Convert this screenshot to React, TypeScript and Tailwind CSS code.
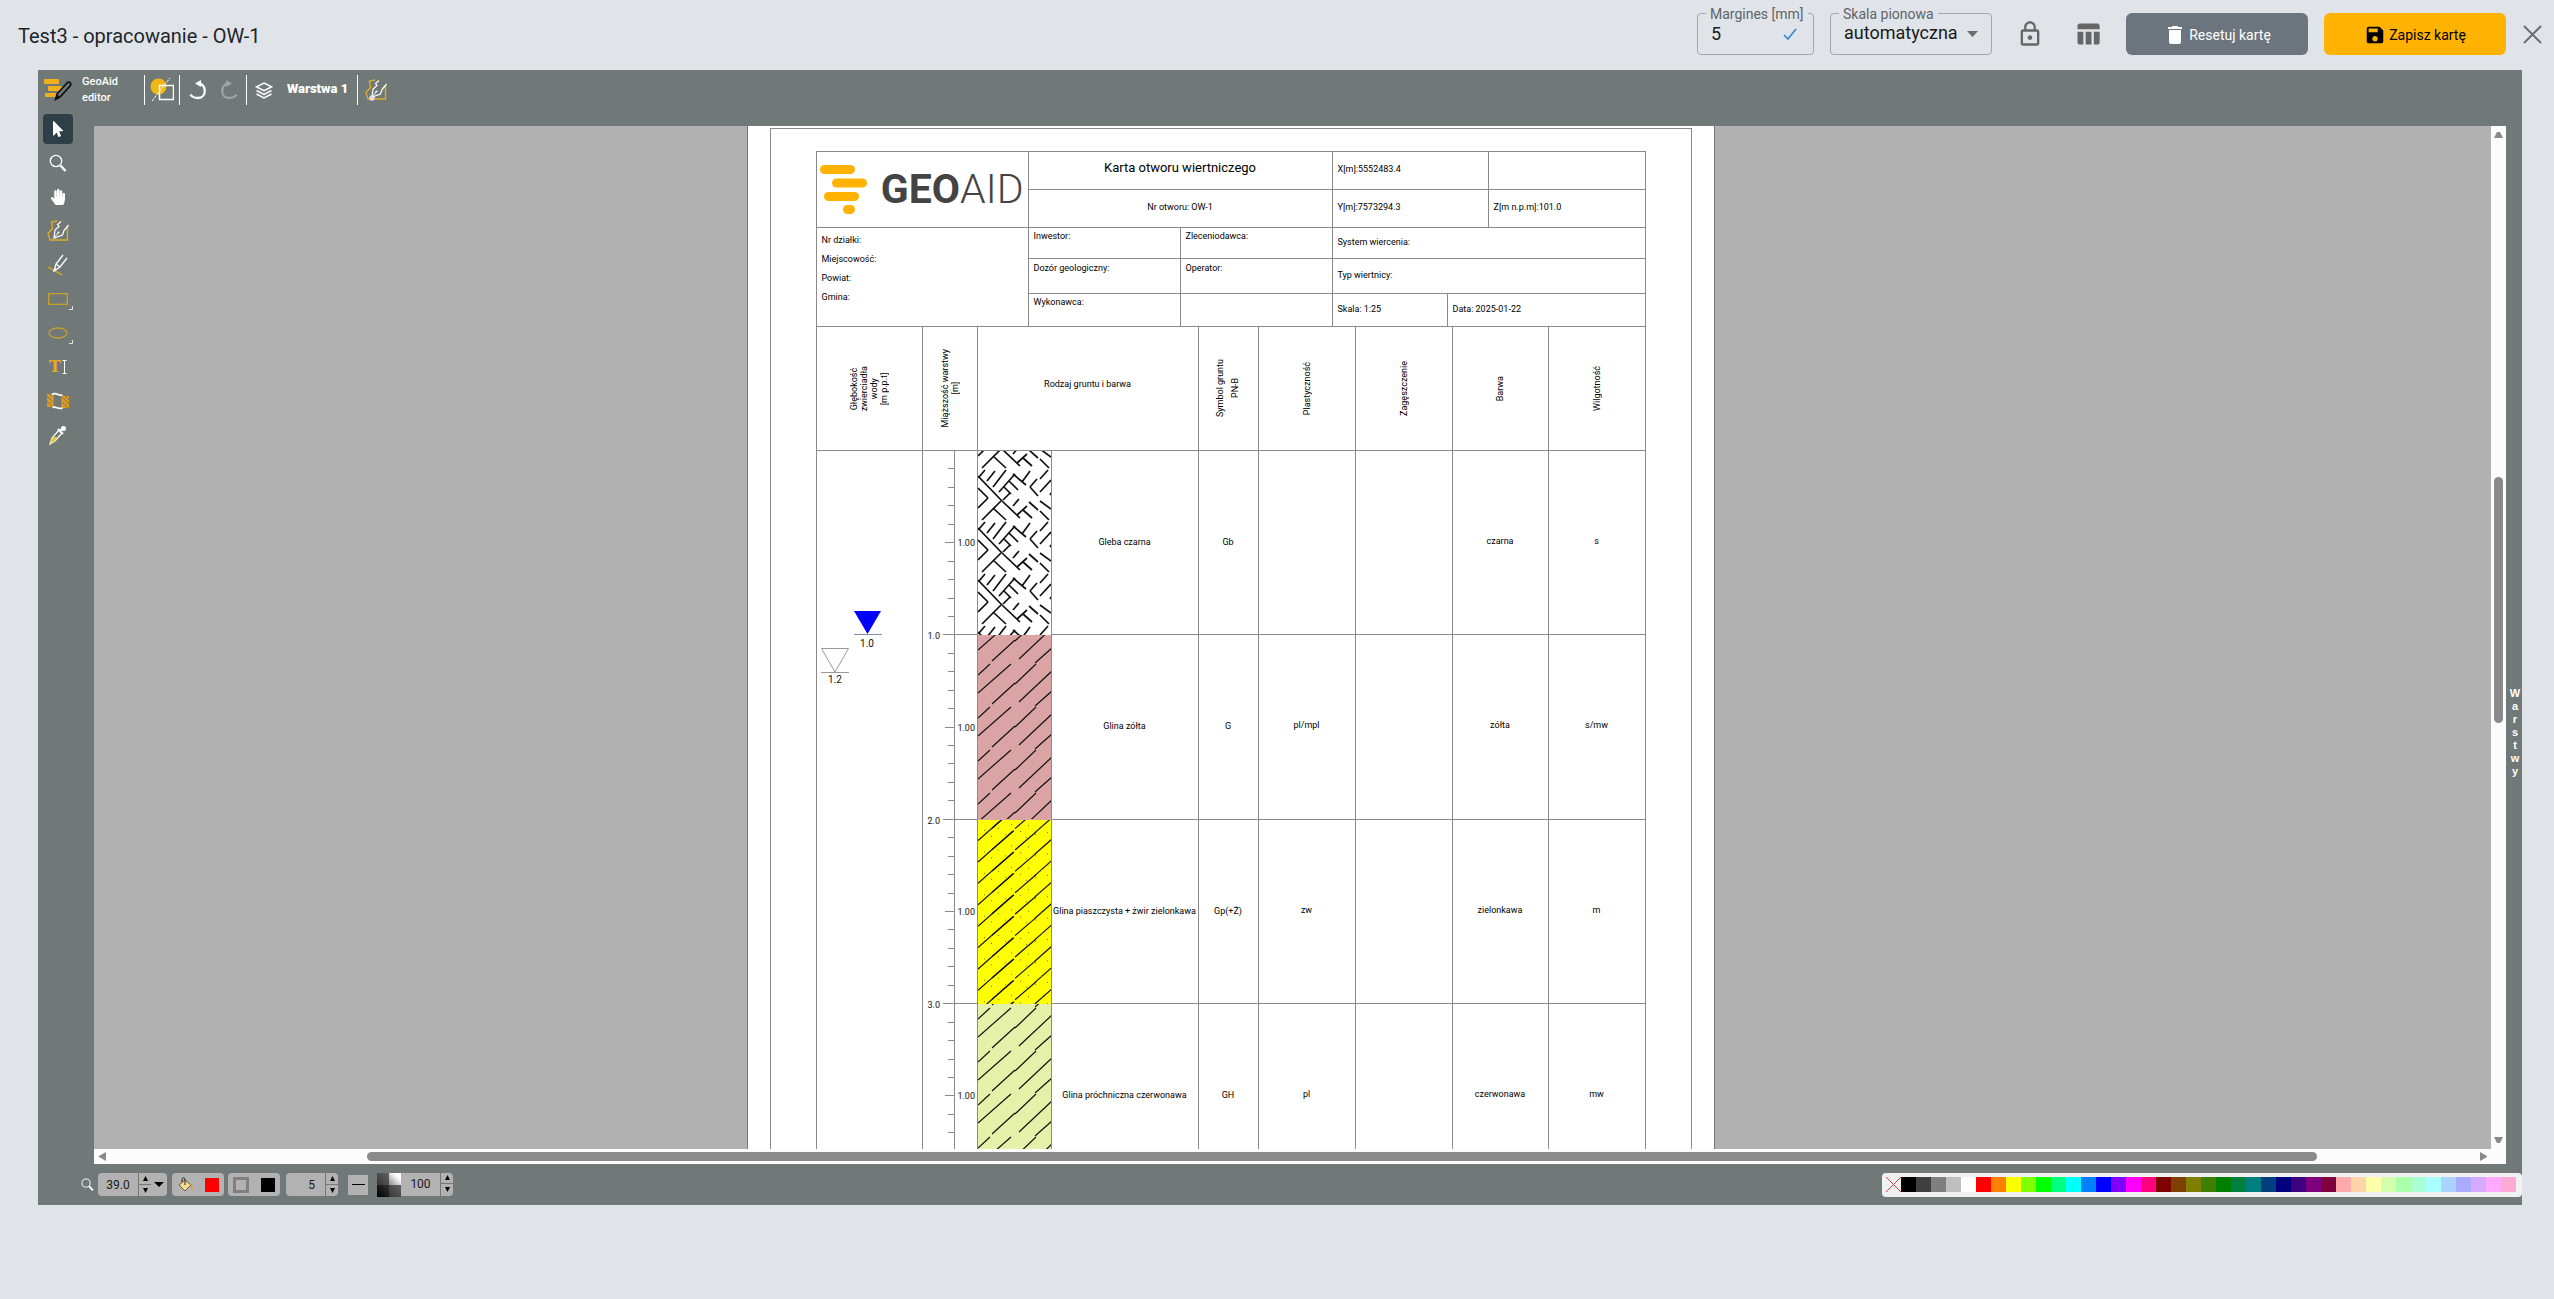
import React from "react";
import { MdLockOutline, MdTableChart, MdDelete, MdSave } from "react-icons/md";
import { FaMousePointer, FaHandPaper } from "react-icons/fa";

const PALETTE = [
  "#000000", "#3f3f3f", "#7f7f7f", "#bfbfbf", "#ffffff",
  "#ff0000", "#ff7f00", "#ffff00", "#7fff00", "#00ff00", "#00ff7f", "#00ffff", "#007fff", "#0000ff", "#7f00ff", "#ff00ff", "#ff007f",
  "#7f0000", "#7f3f00", "#7f7f00", "#3f7f00", "#007f00", "#007f3f", "#007f7f", "#003f7f", "#00007f", "#3f007f", "#7f007f", "#7f003f",
  "#ffaaaa", "#ffd4aa", "#ffffaa", "#d4ffaa", "#aaffaa", "#aaffd4", "#aaffff", "#aad4ff", "#aaaaff", "#d4aaff", "#ffaaff", "#ffaad4",
];

type Seg = [number, number, number, number];

const SOIL: Seg[] = [
  [0, 25, 24, 50], [24, 50, 42, 67], [4, 69, 23, 50], [15, 57, 28, 69], [0, 37, 10, 47], [10, 47, 0, 57],
  [1, 26, 7, 19], [9, 30, 17, 20], [15, 36, 28, 19], [21, 41, 37, 23], [35, 23, 48, 34], [31, 30, 40, 39],
  [26, 36, 33, 43], [25, 49, 32, 42], [35, 55, 41, 48], [44, 31, 52, 20], [59, 28, 52, 36], [52, 36, 60, 45],
  [51, 51, 60, 59], [62, 60, 71, 69], [62, 50, 73, 58], [39, 64, 49, 55], [45, 59, 54, 67], [62, 28, 70, 19],
  [62, 41, 73, 29], [72, 44, 74, 41],
];
const CLAY: Seg[] = [
  [0, 40, 12, 29], [0, 58, 33, 29], [14, 69, 37, 48], [37, 49, 58, 29], [41, 67, 74, 36], [57, 71, 74, 56],
];
const SANDY: Seg[] = [
  [0, 42, 35, 11], [14, 51, 36, 32], [37, 30, 58, 12], [57, 34, 74, 19],
];
const DOTS = [[6, 10], [13, 16], [20, 8], [27, 14], [33, 4], [42, 11], [48, 17], [50, 5], [57, 14], [63, 6], [69, 12]];

const LAYERS = [
  { name: "Gleba czarna", symbol: "Gb", plasticity: "", colour: "czarna", moisture: "s", fill: "#ffffff", segs: SOIL, period: 52, shift: 0, weight: 1.7, dots: false, height: "h-[184px]" },
  { name: "Glina zółta", symbol: "G", plasticity: "pl/mpl", colour: "zółta", moisture: "s/mw", fill: "#dba4a4", segs: CLAY, period: 43, shift: 0, weight: 1.2, dots: false, height: "h-[185px]" },
  { name: "Glina piaszczysta + żwir zielonkawa", symbol: "Gp(+Ż)", plasticity: "zw", colour: "zielonkawa", moisture: "m", fill: "#ffff00", segs: SANDY, period: 21.4, shift: 0, weight: 1.2, dots: true, height: "h-[184px]" },
  { name: "Glina próchniczna czerwonawa", symbol: "GH", plasticity: "pl", colour: "czerwonawa", moisture: "mw", fill: "#e5f1a8", segs: CLAY, period: 43, shift: -25, weight: 1.2, dots: false, height: "h-[184px]" },
];

function Hatch({ layer }: { layer: (typeof LAYERS)[number] }) {
  const repeats = Array.from({ length: Math.ceil(185 / layer.period) + 4 }, (_, i) => (i - 2) * layer.period + layer.shift);
  return (
    <svg width="73" height="184" className="block overflow-hidden">
      {repeats.map((dy) => (
        <g key={dy} transform={`translate(0 ${dy})`} stroke="#111" strokeWidth={layer.weight}>
          {layer.segs.map(([x1, y1, x2, y2], i) => (
            <line key={i} x1={x1} y1={y1} x2={x2} y2={y2} />
          ))}
          {layer.dots && DOTS.map(([x, y]) => <rect key={x} x={x} y={y} width="1" height="1" stroke="none" fill="#7a7a00" />)}
        </g>
      ))}
    </svg>
  );
}

function DepthScale() {
  const step = 184.4;
  return (
    <svg width="54" height="737" className="block" stroke="#8a8a8a" shapeRendering="crispEdges">
      <line x1="31.5" x2="31.5" y1="0" y2="737" />
      {Array.from({ length: 39 }, (_, i) => i + 1).map((i) => (
        <line key={i} x1={i % 10 === 0 ? 20 : i % 5 === 0 ? 22 : 25} x2={i % 10 === 0 ? 54 : 32} y1={(i * step) / 10 - 0.5} y2={(i * step) / 10 - 0.5} />
      ))}
      {[0, 1, 2, 3].map((i) => (
        <g key={i} stroke="none" fill="#111">
          <text x="52" y={(i + 0.5) * step + 3} textAnchor="end" className="text-[9px]">1.00</text>
          {i > 0 && <text x="17" y={i * step + 4} textAnchor="end" className="text-[9px]">{i}.0</text>}
        </g>
      ))}
    </svg>
  );
}

function WaterLevels() {
  return (
    <svg width="105" height="737" className="block">
      <path d="M37 160h27l-13.500 23z" fill="#0000ff" />
      <line x1="37" x2="65" y1="183.5" y2="183.5" stroke="#8888aa" />
      <text x="50" y="196" textAnchor="middle" className="text-[10px]" fill="#111">1.0</text>
      <path d="M4.500 197.500h27l-13.500 23.500zM4 221.500h28" fill="none" stroke="#999" />
      <text x="18" y="232" textAnchor="middle" className="text-[10px]" fill="#111">1.2</text>
    </svg>
  );
}

function PathPenIcon({ dot = false }: { dot?: boolean }) {
  return (
    <svg width="22" height="24" viewBox="0 0 22 24" fill="none">
      <path d="M10 2 4.500 3l1 6.500L1 14.500 3 21h17.500V8.500L17 11" stroke="#dcae28" strokeWidth="1.300" />
      <path d="M14 2.500 10.500 5.500 12 7.500 8 11l-1 8 8.500-3L17 11.500 21.500 6" stroke="#fff" strokeWidth="1.200" />
      <path d="m7 19 4-5" stroke="#fff" />
      <circle cx="11.500" cy="13.500" r="1" fill="#fff" />
      {dot && <circle cx="7" cy="20" r="2.700" fill="#eadbe4" />}
    </svg>
  );
}

const Magnifier = ({ size = 18 }: { size?: number }) => (
  <svg width={size} height={size} viewBox="0 0 18 18" fill="none" stroke="#fff">
    <circle cx="7" cy="7" r="5.700" strokeWidth="1.300" />
    <path d="m11.500 11.500 5 5.500" strokeWidth="2.500" />
  </svg>
);

const Corner = () => (
  <svg width="4" height="4" className="absolute right-0 bottom-1">
    <path d="M0 3.500h3.500V0" fill="none" stroke="#e5e5e5" />
  </svg>
);

const TOOLS: { label: string; icon: React.ReactNode; sub?: boolean }[] = [
  { label: "Zaznacz", icon: <FaMousePointer className="size-4 text-white" /> },
  { label: "Powiększenie", icon: <Magnifier /> },
  { label: "Przesuń", icon: <FaHandPaper className="size-4 text-white" /> },
  { label: "Ścieżka", icon: <PathPenIcon /> },
  {
    label: "Ołówek",
    icon: (
      <svg width="22" height="22" viewBox="0 0 22 22" fill="none">
        <path d="m1 13 14 8" stroke="#c2a233" strokeWidth="1.500" />
        <path d="M16 1 9 10l-2 7 6-4 7-9M9 10l4 3" stroke="#fff" strokeWidth="1.300" />
        <path d="m7 17 1-3 2 2z" fill="#fff" />
      </svg>
    ),
  },
  { label: "Prostokąt", sub: true, icon: <svg width="20" height="12"><rect x=".700" y=".700" width="18.600" height="10.600" fill="none" stroke="#c9a227" strokeWidth="1.300" /></svg> },
  { label: "Elipsa", sub: true, icon: <svg width="20" height="12"><ellipse cx="10" cy="6" rx="9" ry="5" fill="none" stroke="#c9a227" strokeWidth="1.300" /></svg> },
  {
    label: "Tekst",
    icon: (
      <span className="flex items-center gap-px">
        <b className="font-[DejaVu_Serif,serif] text-base leading-none font-bold text-[#e6ac1c]">T</b>
        <svg width="5" height="14" fill="none" stroke="#fff"><path d="M.5.5h4M.5 13.500h4M2.500.5v13" /></svg>
      </span>
    ),
  },
  {
    label: "Wzory",
    icon: (
      <svg width="22" height="18" viewBox="0 0 22 18" fill="none">
        <path d="M0 2h6v13H0zM15 4h7v12h-7z" fill="#dd9a18" />
        <path d="m0 4 6 6M0 9l6 6M3 2l3 3M15 5l7 7M15 10l6 6M18 4l4 4" stroke="#717978" />
        <path d="M6 15V2c3-2 6 2 9 1v13c-3 2-6-2-9-1z" fill="#717978" stroke="#e0a030" />
        <path d="M5 2.500c4-3 7 2 10.500.5M5.500 15.500c3-2 6 2.500 10 .5" stroke="#fff" strokeWidth="1.700" />
      </svg>
    ),
  },
  {
    label: "Pipeta",
    icon: (
      <svg width="18" height="20" viewBox="0 0 18 20" fill="none">
        <path d="M10 5 3 13l-2 6 5-3 7-8" stroke="#fff" strokeWidth="1.200" />
        <path d="m3 14-2 5 5-3 3-4H5z" fill="#e8c62f" />
        <path d="m9 4 5 5M11 6l4-4" stroke="#fff" strokeWidth="2" />
        <circle cx="14.500" cy="3.500" r="2.500" fill="#fff" />
      </svg>
    ),
  },
];

function Spinner() {
  return (
    <span className="grid w-[13px] shrink-0 grid-rows-2 border-l border-[#777]">
      <button aria-label="Zwiększ" className="grid place-items-center border-b border-[#777]">
        <svg width="5" height="5"><path d="M0 5h5L2.500 0z" /></svg>
      </button>
      <button aria-label="Zmniejsz" className="grid place-items-center">
        <svg width="5" height="5"><path d="M0 0h5L2.500 5z" /></svg>
      </button>
    </span>
  );
}

const line = "border-[#8a8a8a]";
const cell = "border-r border-b border-[#8a8a8a] px-[5px]";
const centred = "flex items-center pb-[3px] " + cell;

function VerticalText({ children }: { children: React.ReactNode }) {
  return (
    <span className="flex justify-center">
      <span className="rotate-180 text-center [writing-mode:vertical-rl]">{children}</span>
    </span>
  );
}

function Separator() {
  return <span className="h-[30px] w-px bg-white" />;
}

function BoreholeCard() {
  return (
    <div className="h-fit w-[968px] shrink-0 border-x border-[#777] bg-white px-[22px] pt-[2px] font-[Roboto,sans-serif] text-[9px] leading-[10px] text-black">
      <div className={"border border-b-0 px-[45px] pt-[22px] " + line}>
        <div className={"grid grid-cols-[212px_152px_152px_115px_41px_157px] grid-rows-[38px_38px_31px_35px_33px] border-t border-l " + line}>
          <div className="row-span-2 flex items-center justify-between border-r border-b border-[#8a8a8a] pr-1 pl-[3px]">
            <svg width="47" height="50" fill="#ffb300">
              <rect x="0" y="0" width="35" height="9" rx="4.500" />
              <rect x="12" y="13.500" width="35" height="9" rx="4.500" />
              <rect x="4" y="27" width="35" height="9" rx="4.500" />
              <rect x="23" y="40" width="12" height="9" rx="4.500" />
            </svg>
            <span className="text-[41px] leading-none font-light text-[#444]"><b className="font-bold">GEO</b>AID</span>
          </div>
          <div className={"col-span-2 flex items-center justify-center pb-[5px] text-[13px] " + cell}>Karta otworu wiertniczego</div>
          <div className={"col-span-2 " + centred}>X[m]:5552483.4</div>
          <div className={cell} />
          <div className={"col-span-2 justify-center " + centred}>Nr otworu: OW-1</div>
          <div className={"col-span-2 " + centred}>Y[m]:7573294.3</div>
          <div className={centred}>Z[m n.p.m]:101.0</div>
          <div className={"row-span-3 pt-[3px] leading-[19px] " + cell}>
            <p>Nr działki:</p>
            <p>Miejscowość:</p>
            <p>Powiat:</p>
            <p>Gmina:</p>
          </div>
          <div className={"pt-[3px] " + cell}>Inwestor:</div>
          <div className={"pt-[3px] " + cell}>Zleceniodawca:</div>
          <div className={"col-span-3 " + centred}>System wiercenia:</div>
          <div className={"pt-1 " + cell}>Dozór geologiczny:</div>
          <div className={"pt-1 " + cell}>Operator:</div>
          <div className={"col-span-3 " + centred}>Typ wiertnicy:</div>
          <div className={"pt-[3px] " + cell}>Wykonawca:</div>
          <div className={cell} />
          <div className={centred}>Skala: 1:25</div>
          <div className={"col-span-2 " + centred}>Data: 2025-01-22</div>
        </div>
        <table className={"w-full table-fixed border-separate border-spacing-0 border-l text-center " + line}>
          <colgroup>
            <col className="w-[106px]" />
            <col className="w-[55px]" />
            <col className="w-[74px]" />
            <col className="w-[147px]" />
            <col className="w-[60px]" />
            <col className="w-[97px]" />
            <col className="w-[97px]" />
            <col className="w-[96px]" />
            <col />
          </colgroup>
          <thead>
            <tr className="h-[124px] [&>th]:border-r [&>th]:border-b [&>th]:border-[#8a8a8a] [&>th]:p-0 [&>th]:font-normal">
              <th scope="col"><VerticalText>Głębokość<br />zwierciadła<br />wody<br />[m p.p.t]</VerticalText></th>
              <th scope="col"><VerticalText>Miąższość warstwy<br />[m]</VerticalText></th>
              <th scope="col" colSpan={2}><span className="block pb-[10px]">Rodzaj gruntu i barwa</span></th>
              <th scope="col" className="leading-[15px]"><VerticalText>Symbol gruntu<br />PN-B</VerticalText></th>
              <th scope="col"><VerticalText>Plastyczność</VerticalText></th>
              <th scope="col"><VerticalText>Zagęszczenie</VerticalText></th>
              <th scope="col"><VerticalText>Barwa</VerticalText></th>
              <th scope="col"><VerticalText>Wilgotność</VerticalText></th>
            </tr>
          </thead>
          <tbody className="[&_td]:border-r [&_td]:border-[#8a8a8a] [&_td]:px-0 [&_td]:pt-0">
            {LAYERS.map((l, i) => (
              <tr key={l.symbol} className={l.height}>
                {i === 0 && <td rowSpan={4} className="pb-0 align-top"><WaterLevels /></td>}
                {i === 0 && <td rowSpan={4} className="pb-0 align-top"><DepthScale /></td>}
                <td className="overflow-hidden pb-0 align-top" style={{ background: l.fill }}><Hatch layer={l} /></td>
                <td className="border-b pb-[2px] whitespace-nowrap">{l.name}</td>
                <td className="border-b pb-[2px]">{l.symbol}</td>
                <td className="border-b pb-1">{l.plasticity}</td>
                <td className="border-b" />
                <td className="border-b pb-1">{l.colour}</td>
                <td className="border-b pb-1">{l.moisture}</td>
              </tr>
            ))}
          </tbody>
        </table>
      </div>
    </div>
  );
}

export default function App() {
  return (
    <div className="flex h-screen flex-col bg-[#e0e4e9] font-[Roboto,sans-serif] text-[#212529]">
      <header className="flex h-[70px] shrink-0 items-center pr-3 pb-[2px] pl-[18px]">
        <h1 className="mr-auto pt-[3px] font-[Liberation_Sans_Narrow,Roboto,sans-serif] text-xl">Test3 - opracowanie - OW-1</h1>
        <div className="relative flex h-[42px] w-[117px] items-center rounded border border-[#a3a8ad]">
          <label htmlFor="margin" className="absolute -top-2 left-2 bg-[#e0e4e9] px-1 text-sm leading-4 whitespace-nowrap text-[#5f6468]">Margines [mm]</label>
          <input id="margin" defaultValue="5" className="w-full bg-transparent pl-[13px] text-lg text-[#1a1a1a] outline-none" />
          <svg width="14" height="12" className="mr-4 shrink-0" fill="none" stroke="#2b86d1" strokeWidth="1.600"><path d="m1 7 4 4 8-10" /></svg>
        </div>
        <div className="relative ml-4 flex h-[42px] w-[162px] items-center rounded border border-[#a3a8ad]">
          <label htmlFor="scale" className="absolute -top-2 left-2 bg-[#e0e4e9] px-1 text-sm leading-4 whitespace-nowrap text-[#5f6468]">Skala pionowa</label>
          <select id="scale" className="w-full appearance-none bg-transparent pb-[2px] pl-[13px] text-lg text-[#1a1a1a] outline-none">
            <option>automatyczna</option>
          </select>
          <svg width="11" height="6" className="pointer-events-none absolute right-[13px]" fill="#6b6b6b"><path d="M0 0h11L5.500 6z" /></svg>
        </div>
        <button aria-label="Zablokuj" className="ml-6"><MdLockOutline className="size-7 text-[#666]" /></button>
        <button aria-label="Tabela" className="ml-[30px]"><MdTableChart className="size-7 text-[#666]" /></button>
        <button className="ml-6 flex h-[42px] w-[182px] items-center justify-center gap-[2px] rounded-md bg-[#6c757d] pt-[2px] font-[Liberation_Sans_Narrow,Roboto,sans-serif] text-sm text-white">
          <MdDelete className="size-6" />Resetuj kartę
        </button>
        <button className="ml-4 flex h-[42px] w-[182px] items-center justify-center gap-[3px] rounded-md bg-[#ffb300] pt-[2px] font-[Liberation_Sans_Narrow,Roboto,sans-serif] text-sm text-black">
          <MdSave className="size-[22px]" />Zapisz kartę
        </button>
        <button aria-label="Zamknij" className="ml-[17px]">
          <svg width="19" height="19" stroke="#6b6f73" strokeWidth="2"><path d="m1 1 17 17M18 1 1 18" /></svg>
        </button>
      </header>

      <main className="mr-8 mb-[94px] ml-[38px] flex min-h-0 flex-1 flex-col bg-[#717978] text-white">
        <div className="flex h-[56px] shrink-0 items-start pt-[5px]">
          <div className="flex h-[30px] w-[106px] items-center gap-[10px] pl-[6px] text-[11px] leading-4 font-medium">
            <svg width="28" height="26" viewBox="0 0 28 26">
              <g fill="#f0b01c"><rect y="2" width="15" height="5" rx="1" /><rect x="4" y="9" width="14" height="5" rx="1" /><rect x="1" y="16" width="14" height="4" rx="1" /></g>
              <path d="M13 17 23 6c2-2 5 0 3 3L16 20l-4 2z" fill="#717978" stroke="#111" strokeWidth="1.800" />
              <path d="m13 17-3 7 6-4z" fill="#111" />
            </svg>
            <span>GeoAid<br />editor</span>
          </div>
          <div className="flex h-[30px] items-center">
            <Separator />
            <button aria-label="Operacje na kształtach" className="mx-[5px]">
              <svg width="24" height="26" viewBox="0 0 24 26" fill="none">
                <circle cx="8.500" cy="9.500" r="8" fill="#f3b612" />
                <path d="M2 24 20 1" stroke="#fff" strokeDasharray="3 1" />
                <path d="M9.500 8.500h14v14h-14z" stroke="#fff" strokeWidth="1.500" />
              </svg>
            </button>
            <Separator />
            <button aria-label="Cofnij" className="ml-[9px]">
              <svg width="18" height="20" viewBox="0 0 18 20" fill="none"><path d="M9 3c9 1 9 15 0 15-3 0-6-1-7.500-3.500" stroke="#fff" strokeWidth="2.300" /><path d="M6 3.500 12 0v7z" fill="#fff" /></svg>
            </button>
            <button aria-label="Ponów" className="mr-2 ml-[13px]">
              <svg width="18" height="20" viewBox="0 0 18 20" fill="none"><path d="M9 3C0 4 0 18 9 18c3 0 6-1 7.500-3.500" stroke="#a0a5a4" strokeWidth="2.300" /><path d="M12 3.500 6 0v7z" fill="#a0a5a4" /></svg>
            </button>
            <Separator />
            <svg width="18" height="17" viewBox="0 0 18 17" fill="none" stroke="#fff" strokeWidth="1.500" className="ml-2"><path d="m9 1 7.500 3.800L9 8.600 1.500 4.800zM1.500 8.500 9 12.300l7.500-3.800M1.500 12 9 15.800l7.500-3.800" /></svg>
            <span className="mr-[9px] ml-[14px] pb-[3px] text-[13px] leading-5 font-black">Warstwa 1</span>
            <Separator />
            <button aria-label="Edytuj ścieżkę" className="ml-[7px]"><PathPenIcon dot /></button>
          </div>
        </div>

        <div className="flex min-h-0 flex-1">
          <nav className="-mt-3 flex w-14 shrink-0 flex-col gap-1 pl-[5px]" aria-label="Narzędzia">
            {TOOLS.map((t, i) => (
              <button key={t.label} aria-label={t.label} className={i === 0 ? "grid size-[30px] place-items-center rounded bg-[#2f3f47]" : "relative grid size-[30px] place-items-center"}>
                {t.icon}
                {t.sub && <Corner />}
              </button>
            ))}
          </nav>

          <div className="grid min-w-0 flex-1 grid-cols-[1fr_15px] grid-rows-[minmax(0,1fr)_15px]">
            <div className="flex justify-center overflow-hidden bg-[#b1b1b1] pr-[124px]">
              <BoreholeCard />
            </div>
            <div className="flex flex-col items-center bg-[#fcfcfc] py-[5px]">
              <svg width="9" height="7" fill="#8a8a8a"><path d="M0 7h9L6 1H3z" /></svg>
              <span className="flex-[340]" />
              <span className="w-[9px] flex-[247] rounded-full bg-[#8a8a8a]" />
              <span className="flex-[416]" />
              <svg width="9" height="7" fill="#8a8a8a"><path d="M0 0h9L6 6H3z" /></svg>
            </div>
            <div className="col-span-2 flex items-center bg-[#fcfcfc] pr-[19px] pl-[5px]">
              <svg width="7" height="9" fill="#8a8a8a"><path d="M7 0v9L0 5V4z" /></svg>
              <span className="flex-[261]" />
              <span className="h-[9px] flex-[1950] rounded-full bg-[#8a8a8a]" />
              <span className="flex-[163]" />
              <svg width="7" height="9" fill="#8a8a8a"><path d="M0 0v9l7-4V4z" /></svg>
            </div>
          </div>

          <div className="flex w-4 shrink-0 flex-col items-center pt-[561px] pl-[2px] font-[Liberation_Sans,sans-serif] text-[11px] leading-[13px] font-bold">
            {"Warstwy".split("").map((c, i) => <span key={i}>{c}</span>)}
          </div>
        </div>

        <div className="flex h-[41px] shrink-0 items-center pl-[43px] text-xs text-[#1a1a1a] [&_input]:min-w-0 [&_input]:bg-transparent [&_input]:outline-none">
          <Magnifier size={13} />
          <div className="ml-1 flex h-[23px] w-[69px] rounded bg-[#b2b2b2]">
            <input aria-label="Powiększenie" defaultValue="39.0" className="w-[40px] text-center" />
            <Spinner />
            <button aria-label="Wybierz powiększenie" className="grid flex-1 place-items-center"><svg width="10" height="5"><path d="M0 0h10L5 5z" /></svg></button>
          </div>
          <button aria-label="Wypełnienie" className="ml-[5px] flex h-[23px] w-[52px] items-center justify-between rounded bg-[#b2b2b2] px-[5px]">
            <svg width="17" height="17" viewBox="0 0 17 17">
              <path d="m2 9 6-5 6 5-6 6z" fill="#f3dc93" stroke="#6b5a2a" />
              <path d="M8 9V4c0-3-3-3-3 0v2" fill="none" stroke="#222" />
              <path d="M13 8c3 0 3 3 2.500 7-2-1-1-5-2.500-7z" fill="#e0a040" />
            </svg>
            <span className="size-[14px] bg-[#ff0000]" />
          </button>
          <button aria-label="Obrys" className="ml-1 flex h-[23px] w-[52px] items-center justify-between rounded bg-[#b2b2b2] px-[5px]">
            <span className="size-4 border-[3px] border-[#808080]" />
            <span className="size-[14px] bg-black" />
          </button>
          <div className="ml-[6px] flex h-[23px] w-[52px] rounded bg-[#b2b2b2]">
            <input aria-label="Grubość obrysu" defaultValue="5" className="w-0 flex-1 pr-[10px] text-right" />
            <Spinner />
          </div>
          <button aria-label="Styl linii" className="ml-[10px] grid size-5 place-items-center bg-[#b2b2b2]"><span className="h-px w-[13px] bg-black" /></button>
          <div className="ml-[9px] flex h-6 w-[76px]">
            <svg width="24" height="24" className="shrink-0">
              <defs>
                <linearGradient id="oa" x1="0" y1="1" x2="1" y2="0"><stop stopColor="#222" /><stop offset="1" stopColor="#777" /></linearGradient>
                <linearGradient id="ob" x1="0" y1="1" x2="1" y2="0"><stop stopColor="#888" /><stop offset=".7" stopColor="#fff" /></linearGradient>
                <linearGradient id="oc" x1="0" y1="1" x2="1" y2="0"><stop stopColor="#000" /><stop offset="1" stopColor="#333" /></linearGradient>
              </defs>
              <rect width="24" height="24" fill="url(#oa)" />
              <rect x="12" width="12" height="12" fill="url(#ob)" />
              <rect y="12" width="12" height="12" fill="url(#oc)" />
            </svg>
            <div className="flex h-[23px] w-[52px] rounded-r bg-[#b2b2b2]">
              <input aria-label="Krycie" defaultValue="100" className="w-0 flex-1 text-center" />
              <Spinner />
            </div>
          </div>
          <div className="ml-auto flex h-6 rounded bg-[#f1f1f1] py-1 pr-[6px] pl-1">
            <button aria-label="Brak koloru" className="w-[15px]"><svg width="15" height="15" stroke="#cc4444"><path d="m0 0 15 15M15 0 0 15" /></svg></button>
            {PALETTE.map((c) => <button key={c} aria-label={c} className="h-[15px] w-[15px]" style={{ background: c }} />)}
          </div>
        </div>
      </main>
    </div>
  );
}
